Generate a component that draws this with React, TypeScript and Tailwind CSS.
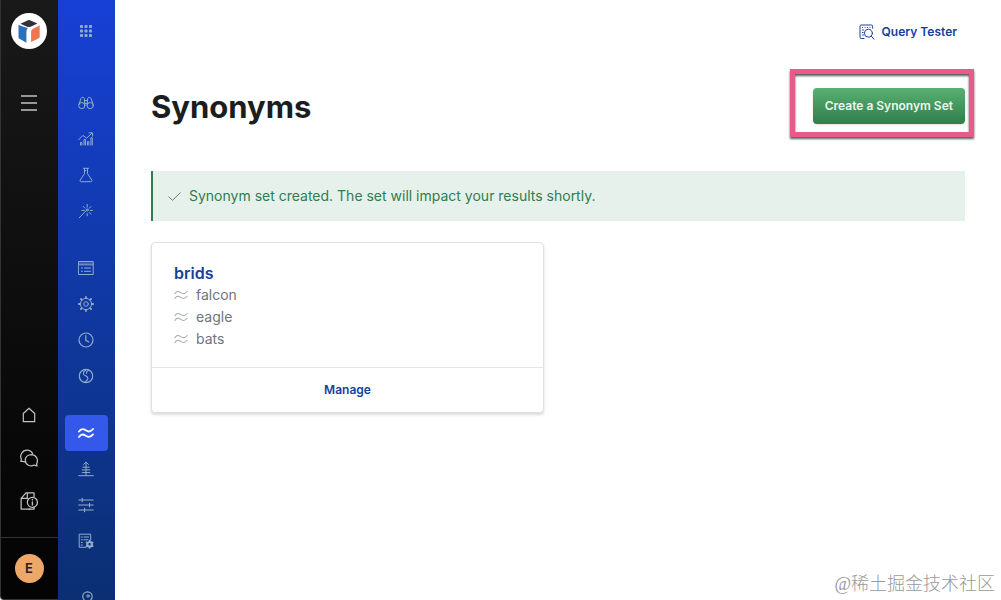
import type { ReactNode } from "react";

interface IconProps {
  children: ReactNode;
  size?: string;
}

const Icon = ({ children, size = "size-4" }: IconProps) => (
  <svg
    viewBox="0 0 16 16"
    fill="none"
    stroke="currentColor"
    strokeLinecap="round"
    strokeLinejoin="round"
    className={size}
    aria-hidden="true"
  >
    {children}
  </svg>
);

const wavePath =
  "M1 6.6c1-1.6 2.1-2.5 3.6-2.5 2.5 0 3.8 2.4 6.3 2.4 1.6 0 2.9-1 4.1-2.5M1 12c1-1.6 2.1-2.5 3.6-2.5 2.5 0 3.8 2.4 6.3 2.4 1.6 0 2.9-1 4.1-2.5";

const dots = [3.5, 8, 12.5];

const icons = {
  grid: (
    <Icon>
      {dots.map((y) =>
        dots.map((x) => (
          <rect
            key={`${x}-${y}`}
            x={x - 1.5}
            y={y - 1.5}
            width="3"
            height="3"
            rx="0.8"
            fill="currentColor"
            stroke="none"
          />
        ))
      )}
    </Icon>
  ),
  binoculars: (
    <Icon>
      <circle cx="3.8" cy="10.6" r="3.1" />
      <circle cx="12.2" cy="10.6" r="3.1" />
      <path d="M.9 9.5 3 3.4c.5-1.4 3-1.4 3.3 0l.6 6.8M15.1 9.5 13 3.4c-.5-1.4-3-1.4-3.3 0l-.6 6.8M6.5 5.5h3M6.9 8.4h2.2" />
    </Icon>
  ),
  analytics: (
    <Icon>
      <path d="M.7 8.7 5 4.4l3.6 2.8 5.2-5M11.2 1.8h3.4v3.4M2.5 14v-2.6h1.4V14M6 14V8.5h1.4V14M9.4 14v-3.4h1.4V14M12.9 14V6.8h1.4V14" />
    </Icon>
  ),
  flask: (
    <Icon>
      <path d="M5.4 1.3h5.2M6.5 1.5v5.2L2.2 13c-.5.9 0 1.7 1 1.7h9.6c1 0 1.5-.8 1-1.7L9.5 6.7V1.5M6.5 3.6h1.4" />
    </Icon>
  ),
  wand: (
    <Icon>
      <path d="m1.2 14.8 7-7.2M9.2 1.4v2.8M9.2 10.6v2.2M12.2 7.4h2.2M3.9 7.4h2.4M5.3 3.5 7 5.2M13 3.5 11.3 5.2M11.3 9.6l1.7 1.7" />
      <circle cx="9.2" cy="7" r="1" />
    </Icon>
  ),
  list: (
    <Icon>
      <path d="M.8 1.5h14.4v13H.8zM.8 4.8h14.4M3.4 8h1M3.4 11.3h1M6.5 8h6M6.5 11.3h6" />
      <path d="M1 3.1h14" strokeWidth=".7" />
    </Icon>
  ),
  gear: (
    <Icon>
      <circle cx="8" cy="8" r="5.6" />
      <circle cx="8" cy="8" r="2.3" />
      <path
        d="M8 .9v1.2M8 13.9v1.2M.9 8h1.2M13.9 8h1.2M2.9 2.9l.9.9M12.2 12.2l.9.9M2.9 13.1l.9-.9M12.2 3.8l.9-.9"
        strokeWidth="1.8"
      />
    </Icon>
  ),
  clock: (
    <Icon>
      <circle cx="8" cy="8" r="7" strokeWidth="1.2" />
      <path d="M7.8 3.6v4.8l3 1.6" strokeWidth="1.2" />
    </Icon>
  ),
  swirl: (
    <Icon>
      <circle cx="8" cy="8" r="6.7" strokeWidth="1.2" />
      <path
        d="M8.6 1.5C6.2 3 5 4.6 5.5 6.1c.7 1.9 4.3 1.7 4.4 4.1.1 1.4-1.4 2.8-3.1 4.1M10.6 2.2C9 3.2 8.2 4.2 8.4 5.4"
        strokeWidth="1.1"
      />
    </Icon>
  ),
  waves: (
    <Icon>
      <path d={wavePath} strokeWidth="1.8" />
    </Icon>
  ),
  boost: (
    <Icon>
      <path d="M8 14.5V1.2M5.6 3.5 8 1.1l2.4 2.4M4.8 6.2h6.4M4.2 8.9h7.6M4.2 11.6h7.6M.7 14.7h14.6" />
    </Icon>
  ),
  sliders: (
    <Icon>
      <path d="M.8 3h14.4M.8 8h14.4M.8 13h14.4M4.2 1.3v3.4M11.5 6.3v3.4M6.6 11.3v3.4" strokeWidth="1.1" />
    </Icon>
  ),
  schema: (
    <Icon>
      <path d="M8 14.3H1.2V1.2h11.5v6M3.3 4h1M6 4h4.6M3.3 6.8h1M6 6.8h4M3.3 9.5h1M3.3 12h1" />
      <circle cx="11.6" cy="11.3" r="2.3" strokeWidth="2.2" />
      <path
        d="M11.6 7.6v1M11.6 14v1M8.4 9.4l.9.5M13.9 12.7l.9.5M8.4 13.2l.9-.5M13.9 9.9l.9-.5"
        strokeWidth="1.6"
      />
    </Icon>
  ),
  key: (
    <Icon>
      <circle cx="9.5" cy="6.5" r="4.7" strokeWidth="1.2" />
      <circle cx="10" cy="6" r="1.2" />
      <path d="m6 10-4.5 5" />
    </Icon>
  ),
};

const navGroups = [
  [
    { label: "Overview", icon: icons.binoculars },
    { label: "Analytics", icon: icons.analytics },
    { label: "Tests", icon: icons.flask },
    { label: "Tuning", icon: icons.wand },
  ],
  [
    { label: "Documents", icon: icons.list },
    { label: "Settings", icon: icons.gear },
    { label: "History", icon: icons.clock },
    { label: "Crawler", icon: icons.swirl },
  ],
  [
    { label: "Synonyms", icon: icons.waves, active: true },
    { label: "Curations", icon: icons.boost },
    { label: "Relevance", icon: icons.sliders },
    { label: "Result settings", icon: icons.schema },
  ],
  [{ label: "Credentials", icon: icons.key }],
];

const synonyms = ["falcon", "eagle", "bats"];

const Logo = () => (
  <svg viewBox="0 0 36 36" className="size-9" aria-hidden="true">
    <circle cx="18" cy="18" r="18" fill="#fff" />
    <path d="M9.4 10.7 17 7.3q1-.4 2 0l7.4 3.3-5.6 2.7c-1.9.9-3.4.9-5.2.1z" fill="#303238" />
    <path d="M7.5 11.8c2.9 1.4 5.5 2.4 9.4 3.2-1 1.2-1.5 2.3-1.5 4v10.8l-6.5-3.7c-.9-.5-1.4-1.1-1.4-2.1z" fill="#2b70bf" />
    <path
      d="m28.7 12.6-6.2 2.8c-1.7.8-2.4 1.9-2.4 3.6v10l7.2-3.4c.9-.4 1.4-1.1 1.4-2.1z"
      fill="#f1754f"
    />
  </svg>
);

const DarkSidebar = () => (
  <aside className="flex w-[58px] shrink-0 flex-col items-center rounded-bl border-b border-l border-[#333] bg-linear-to-b from-[#191919] to-[#040404] pt-[13px] text-[#c2c2c2]">
    <a href="#home" aria-label="App home" className="pr-px">
      <Logo />
    </a>
    <button aria-label="Menu" className="mt-9 flex h-9 w-full items-center justify-center pr-px">
      <Icon>
        <path d="M0 1h16M0 8h16M0 15h16" strokeWidth="1.4" strokeLinecap="butt" />
      </Icon>
    </button>
    <nav className="mt-auto mb-[18px] flex w-full flex-col gap-[7px]">
      <a href="#dashboard" aria-label="Dashboard" className="flex h-9 items-center justify-center pr-px">
        <Icon>
          <path d="M2.3 6.5 8 1.2l5.7 5.3v8.2H2.3z" strokeWidth="1.2" />
        </Icon>
      </a>
      <a href="#support" aria-label="Support" className="flex h-9 items-center justify-center pr-px">
        <Icon size="size-[18px]">
          <path
            d="M5 11.3c-1.1.2-2 0-2.9-.4L.8 11l.4-2C-.5 5.7 2 1 6.2 1c2.3 0 4 1.1 4.9 2.9M14.7 13.3c2-3.8-.2-8.2-4.4-8.3-3.3 0-5.6 2.2-5.6 5.1 0 4 4.6 6.2 8 4.2l2.5.8z"
            strokeWidth="1.1"
          />
        </Icon>
      </a>
      <a href="#docs" aria-label="Documentation" className="flex h-9 items-center justify-center pr-px">
        <Icon size="size-[18px]">
          <path d="M8.5 15.2H1V5.7L5.3.8h7.2v3.7M1 5.7h5.5V1" strokeWidth="1.1" />
          <circle cx="11" cy="9.2" r="4.5" strokeWidth="1.1" />
          <path d="M11 8.8v2.8M11 6.7v.3M12.5 13.5v1.7H8" strokeWidth="1.2" />
        </Icon>
      </a>
    </nav>
    <div className="flex h-[62px] w-full items-center justify-center border-t border-[#333] pr-px">
      <button
        aria-label="Account"
        className="flex size-[29px] items-center justify-center rounded-full bg-[#eda869] text-[13px] font-semibold text-[#24201c]"
      >
        E
      </button>
    </div>
  </aside>
);

const BlueSidebar = () => (
  <aside className="flex w-[57px] shrink-0 flex-col items-center overflow-hidden bg-linear-to-b from-[#1740d6] to-[#0b2f72] pt-[13px] text-[#91abcb]">
    <button
      aria-label="All engines"
      className="mb-9 flex h-9 w-[43px] shrink-0 items-center justify-center pr-px"
    >
      {icons.grid}
    </button>
    <nav className="flex flex-col gap-[21px]">
      {navGroups.map((group, index) => (
        <ul key={index}>
          {group.map((item) => (
            <li key={item.label}>
              <a
                href="#nav"
                aria-label={item.label}
                className={
                  "active" in item
                    ? "flex h-9 w-[43px] items-center justify-center rounded bg-[#3459ea] pr-px text-white"
                    : "flex h-9 w-[43px] items-center justify-center pr-px"
                }
              >
                {item.icon}
              </a>
            </li>
          ))}
        </ul>
      ))}
    </nav>
  </aside>
);

const SynonymCard = () => (
  <article className="rounded border border-[#dde1e6] bg-white shadow-[0_2px_3px_rgba(0,0,0,0.14)]">
    <div className="px-[22px] pt-[19px] pb-[17px]">
      <h2 className="text-base leading-[22px] font-semibold text-[#17409c]">brids</h2>
      <ul className="text-sm leading-[22px] text-[#6e757e]">
        {synonyms.map((word) => (
          <li key={word} className="flex items-center gap-2">
            <span className="text-[#a3a9b1]">
              <Icon size="size-[14px]">
                <path d={wavePath} strokeWidth="1.2" />
              </Icon>
            </span>
            {word}
          </li>
        ))}
      </ul>
    </div>
    <div className="flex h-[45px] items-center justify-center border-t border-[#e3e7ea]">
      <button className="text-xs font-semibold text-[#17409c]">Manage</button>
    </div>
  </article>
);

const App = () => {
  return (
    <div className="relative flex h-screen overflow-hidden bg-white font-['Inter',sans-serif]">
      <DarkSidebar />
      <BlueSidebar />

      <main className="min-w-0 flex-1 px-9 pt-5">
        <div className="flex justify-end pr-2">
          <a href="#query" className="flex h-6 items-center gap-[7px] text-xs font-semibold text-[#17409c]">
            <Icon>
              <path d="M5 14.5H2.2c-.8 0-1.2-.4-1.2-1.2V2.2C1 1.4 1.4 1 2.2 1h10.2c.8 0 1.2.4 1.2 1.2v2M3.5 3.5h.1M6 3.5h.1M8.5 3.5h.1M11 3.5h.1M3.5 6h1M3.5 8.5h.6M3.5 11h1" />
              <circle cx="9.4" cy="9.2" r="4" />
              <path d="m12.3 12.2 2.7 3" />
            </Icon>
            Query Tester
          </a>
        </div>

        <header className="mt-11 flex items-start justify-between">
          <h1 className="text-[31px] leading-[38px] font-bold text-[#1b1d20]">Synonyms</h1>
          <div className="relative">
            <button className="h-9 rounded bg-linear-to-b from-[#58b071] to-[#317e4b] px-3 text-xs font-semibold text-[#eaf7ed] shadow-sm">
              Create a Synonym Set
            </button>
            <div className="pointer-events-none absolute -top-[19px] -right-[9px] -bottom-[13px] -left-[23px] border-[5px] border-[#e85a8a] drop-shadow-[0_2px_1px_rgba(0,0,0,0.65)]" />
          </div>
        </header>

        <div
          role="status"
          className="mt-[45px] flex h-[50px] items-center gap-2 border-l-2 border-[#2f7d50] bg-[#e7f1eb] pl-[15px] text-sm text-[#2f7d50]"
        >
          <span className="text-[#4c6656]">
            <Icon size="size-[13px]">
              <path d="m1 8.5 4.5 4.2L15 3.5" />
            </Icon>
          </span>
          Synonym set created. The set will impact your results shortly.
        </div>

        <section className="mt-[21px] grid grid-cols-2 gap-7">
          <SynonymCard />
        </section>
      </main>

      <p className="absolute right-[6px] bottom-1 font-['Liberation_Serif','Noto_Sans_CJK_SC',serif] text-lg leading-6 font-light text-[#999]">
        @稀土掘金技术社区
      </p>
    </div>
  );
};

export default App;
